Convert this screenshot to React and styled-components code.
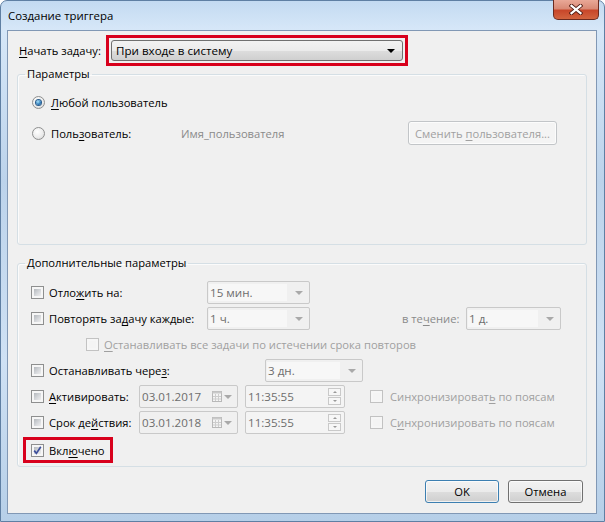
import React from 'react'
import styled, { createGlobalStyle } from 'styled-components'

const GlobalStyle = createGlobalStyle`
  html, body { margin: 0; padding: 0; }
  body {
    width: 605px;
    height: 522px;
    overflow: hidden;
    font-family: "Open Sans", "Noto Sans", sans-serif;
    font-size: 11.2px;
    color: #000;
    white-space: nowrap;
  }
`

const Window = styled.div`
  box-sizing: border-box;
  width: 605px;
  height: 522px;
  display: flex;
  flex-direction: column;
  padding: 0 7px 7px 6px;
  border: 1px solid #5f7fa3;
  border-radius: 7px 7px 0 0;
  background: linear-gradient(180deg, #c3daf1 0px, #d6e7f8 28px, #bcd3eb 180px, #cfe1f4 360px, #b6cfe8 100%);
`

const TitleBar = styled.div`
  height: 29px;
  display: flex;
  align-items: center;
  justify-content: space-between;
  padding-left: 1px;
`

const Title = styled.span`
  font-size: 11.4px;
  color: #000;
`

const CloseButton = styled.div`
  align-self: flex-start;
  box-sizing: border-box;
  width: 46px;
  height: 20px;
  margin: -1px -2px 0 0;
  border: 1px solid #6b2a1f;
  border-top: none;
  border-radius: 0 0 5px 5px;
  background: linear-gradient(180deg, #e9a897 0%, #d98a76 45%, #c8472a 55%, #d2643f 100%);
  display: flex;
  align-items: center;
  justify-content: center;
`

const Client = styled.div`
  flex: 1;
  display: flex;
  flex-direction: column;
  background: #f0f0f0;
  border: 1px solid #8198b5;
  padding: 4px 9px 0 9px;
`

const TopRow = styled.div`
  display: flex;
  align-items: center;
  padding-left: 2px;
`

const StartLabel = styled.span`
  width: 87px;
  flex: none;
`

const Highlight = styled.div`
  display: inline-flex;
  align-items: center;
  align-self: flex-start;
  border: 3px solid #d8001c;
  padding: ${p => p.$pad};
  margin-left: ${p => p.$shift || 0}px;
`

const Select = styled.div`
  box-sizing: border-box;
  width: 292px;
  height: 21px;
  border: 1px solid #707070;
  border-radius: 3px;
  background: linear-gradient(180deg, #f2f2f2 0%, #ebebeb 50%, #dddddd 51%, #cfcfcf 100%);
  display: flex;
  align-items: center;
  justify-content: space-between;
  padding: 0 7px 0 4px;
  font-size: 11.6px;
`

const BlackArrow = styled.span`
  width: 0;
  height: 0;
  border-left: 4px solid transparent;
  border-right: 4px solid transparent;
  border-top: 4px solid #000;
`

const Group = styled.fieldset`
  margin: ${p => p.$top}px 0 0 0;
  border: 1px solid #d5dfe5;
  border-radius: 3px;
  box-shadow: inset 1px 1px 0 #fbfbfb;
  padding: 10px 13px ${p => p.$bottom}px ${p => p.$left}px;
  min-width: 0;
`

const Legend = styled.legend`
  padding: 0 2px;
  margin-left: ${p => p.$shift}px;
  line-height: 16px;
`

const Rows = styled.div`
  display: flex;
  flex-direction: column;
  gap: ${p => p.$gap}px;
`

const Row = styled.div`
  display: flex;
  align-items: center;
  height: ${p => p.$h || 23}px;
`

const Choice = styled.span`
  display: flex;
  align-items: center;
  flex: none;
  gap: ${p => p.$gap || 5}px;
  width: ${p => (p.$w ? `${p.$w}px` : 'auto')};
  margin-left: ${p => p.$indent || 0}px;
  color: ${p => (p.$disabled ? '#a0a0a0' : '#000')};
`

const U = styled.span`
  text-decoration: underline;
  text-underline-offset: 2px;
  text-decoration-thickness: 1px;
`

const RadioOuter = styled.span`
  box-sizing: border-box;
  width: 13px;
  height: 13px;
  flex: none;
  border-radius: 50%;
  border: 1px solid #8e8f8f;
  background: radial-gradient(circle at 40% 35%, #ffffff 0, #ececec 55%, #cfcfcf 100%);
  display: inline-flex;
  align-items: center;
  justify-content: center;
`

const RadioDot = styled.span`
  width: 5px;
  height: 5px;
  border-radius: 50%;
  background: radial-gradient(circle at 40% 35%, #a8e4fc 0, #2b78b8 60%, #11406f 100%);
  box-shadow: 0 0 0 1px #2a5d8c;
`

const Box = styled.span`
  box-sizing: border-box;
  width: 13px;
  height: 13px;
  flex: none;
  border: 1px solid ${p => (p.$disabled ? '#c2c2c2' : '#8e8f8f')};
  padding: 2px;
  background: #f6f6f6;
  display: inline-flex;
  position: relative;
`

const BoxFill = styled.span`
  flex: 1;
  background: ${p => (p.$disabled ? '#f4f4f4' : 'linear-gradient(135deg, #b4b8bd 0%, #d9dbde 60%, #eeeeee 100%)')};
`

const CheckMark = styled.svg`
  position: absolute;
  left: 0;
  top: 0;
`

const Muted = styled.span`
  color: ${p => p.$c || '#8a8a8a'};
  width: ${p => (p.$w ? `${p.$w}px` : 'auto')};
  margin-left: ${p => p.$ml || 0}px;
  flex: none;
`

const FlatButton = styled.div`
  box-sizing: border-box;
  width: ${p => p.$w}px;
  height: ${p => p.$h}px;
  border: 1px solid ${p => p.$border};
  border-radius: 3px;
  background: ${p => p.$bg};
  color: ${p => p.$color || '#000'};
  display: flex;
  align-items: center;
  justify-content: center;
  flex: none;
  box-shadow: inset 0 0 0 1px rgba(255, 255, 255, 0.7);
`

const Field = styled.div`
  box-sizing: border-box;
  width: ${p => p.$w}px;
  height: 23px;
  margin-left: ${p => p.$ml || 0}px;
  border: 1px solid #c9c9c9;
  border-radius: 2px;
  background: ${p => p.$bg || '#f0f0f0'};
  display: flex;
  align-items: center;
  padding: 2px 2px 2px 1px;
  flex: none;
  color: #6d6d6d;
  font-size: 11.6px;
`

const FieldText = styled.span`
  align-self: stretch;
  display: flex;
  align-items: center;
  flex: 1;
  padding-left: 1px;
  background: ${p => p.$bg || 'transparent'};
  margin-right: ${p => p.$mr || 0}px;
`

const GrayArrow = styled.span`
  width: 0;
  height: 0;
  border-left: 4px solid transparent;
  border-right: 4px solid transparent;
  border-top: 4px solid #a9a9a9;
  margin-right: ${p => p.$mr || 4}px;
  margin-left: ${p => p.$ml || 0}px;
  flex: none;
`

const Spinner = styled.div`
  display: flex;
  flex-direction: column;
  gap: 1px;
  width: 13px;
  flex: none;
  margin-right: 1px;
`

const SpinPart = styled.div`
  box-sizing: border-box;
  height: 8px;
  border: 1px solid #c9c9c9;
  background: #f7f7f7;
  display: flex;
  align-items: center;
  justify-content: center;
  &::before {
    content: '';
    width: 0;
    height: 0;
    border-left: 2px solid transparent;
    border-right: 2px solid transparent;
    ${p => (p.$up ? 'border-bottom: 2px solid #9a9a9a;' : 'border-top: 2px solid #9a9a9a;')}
  }
`

const ButtonRow = styled.div`
  display: flex;
  justify-content: flex-end;
  gap: 9px;
  margin: 13px 4px 0 0;
`

const btnBg = 'linear-gradient(180deg, #f2f2f2 0%, #ebebeb 50%, #dddddd 51%, #cfcfcf 100%)'

function Radio({ checked }) {
  return <RadioOuter>{checked && <RadioDot />}</RadioOuter>
}

function Check({ checked, disabled }) {
  return (
    <Box $disabled={disabled}>
      <BoxFill $disabled={disabled} />
      {checked && (
        <CheckMark width="11" height="11" viewBox="0 0 11 11">
          <path d="M2.2 5.6 L4.4 8.4 L8.8 1.8" fill="none" stroke="#3d4f9c" strokeWidth="1.7" />
        </CheckMark>
      )}
    </Box>
  )
}

function Combo({ w, value, ml }) {
  return (
    <Field $w={w} $ml={ml}>
      <FieldText $bg="#f7f7f7" $mr={8}>{value}</FieldText>
      <GrayArrow />
    </Field>
  )
}

function DateField({ value }) {
  return (
    <Field $w={99}>
      <FieldText>{value}</FieldText>
      <svg width="10" height="11" viewBox="0 0 10 11">
        <rect x="0.5" y="0.5" width="9" height="10" fill="#f4f4f4" stroke="#b8b8b8" />
        <rect x="0.5" y="0.5" width="9" height="2" fill="#c9c9c9" />
        <path d="M3.5 3 V10 M6.5 3 V10 M1 5.5 H9 M1 8 H9" stroke="#cdcdcd" strokeWidth="1" />
      </svg>
      <GrayArrow $mr={3} $ml={2} />
    </Field>
  )
}

function TimeField({ value }) {
  return (
    <Field $w={100} $ml={7} $bg="#f4f4f4">
      <FieldText>{value}</FieldText>
      <Spinner>
        <SpinPart $up />
        <SpinPart />
      </Spinner>
    </Field>
  )
}

export default function App() {
  return (
    <>
      <GlobalStyle />
      <Window>
        <TitleBar>
          <Title>Создание триггера</Title>
          <CloseButton>
            <svg width="14" height="11" viewBox="0 0 14 11">
              <path d="M2.5 1.8 L11.5 9.2 M11.5 1.8 L2.5 9.2" stroke="#4e1b12" strokeWidth="4" strokeLinecap="square" />
              <path d="M2.5 1.8 L11.5 9.2 M11.5 1.8 L2.5 9.2" stroke="#ffffff" strokeWidth="2.2" strokeLinecap="square" />
            </svg>
          </CloseButton>
        </TitleBar>
        <Client>
          <TopRow>
            <StartLabel><U>Н</U>ачать задачу:</StartLabel>
            <Highlight $pad="2px">
              <Select>
                <span>При входе в систему</span>
                <BlackArrow />
              </Select>
            </Highlight>
          </TopRow>

          <Group $top={0} $bottom={99} $left={14}>
            <Legend $shift={-7}>Параметры</Legend>
            <Rows $gap={9}>
              <Row $h={20}>
                <Choice $gap={6}>
                  <Radio checked />
                  <span><U>Л</U>юбой пользователь</span>
                </Choice>
              </Row>
              <Row $h={24}>
                <Choice $gap={6} $w={149}>
                  <Radio />
                  <span>Поль<U>з</U>ователь:</span>
                </Choice>
                <Muted $w={227}>Имя_пользователя</Muted>
                <FlatButton $w={149} $h={24} $border="#c2c5c8" $bg="#f4f4f4" $color="#a0a0a0">
                  <span>Сменить <U>п</U>ользователя...</span>
                </FlatButton>
              </Row>
            </Rows>
          </Group>

          <Group $top={10} $bottom={3} $left={13}>
            <Legend $shift={-6}>Дополнительные параметры</Legend>
            <Rows $gap={3}>
              <Row>
                <Choice $w={176}>
                  <Check />
                  <span>Отло<U>ж</U>ить на:</span>
                </Choice>
                <Combo w={103} value="15 мин." />
              </Row>
              <Row>
                <Choice $w={176}>
                  <Check />
                  <span>Повторять за<U>д</U>ачу каждые:</span>
                </Choice>
                <Combo w={103} value="1 ч." />
                <Muted $ml={92} $w={64}>в те<U>ч</U>ение:</Muted>
                <Combo w={95} value="1 д." />
              </Row>
              <Row>
                <Choice $indent={55} $disabled>
                  <Check disabled />
                  <span><U>О</U>станавливать все задачи по истечении срока повторов</span>
                </Choice>
              </Row>
              <Row>
                <Choice $w={234}>
                  <Check />
                  <span>Останавливать чере<U>з</U>:</span>
                </Choice>
                <Combo w={98} value="3 дн." />
              </Row>
              <Row>
                <Choice $w={108}>
                  <Check />
                  <span><U>А</U>ктивировать:</span>
                </Choice>
                <DateField value="03.01.2017" />
                <TimeField value="11:35:55" />
                <Choice $indent={25} $disabled $gap={7}>
                  <Check disabled />
                  <span>Синхронизироват<U>ь</U> по поясам</span>
                </Choice>
              </Row>
              <Row>
                <Choice $w={108}>
                  <Check />
                  <span>Срок де<U>й</U>ствия:</span>
                </Choice>
                <DateField value="03.01.2018" />
                <TimeField value="11:35:55" />
                <Choice $indent={25} $disabled $gap={7}>
                  <Check disabled />
                  <span>С<U>и</U>нхронизировать по поясам</span>
                </Choice>
              </Row>
              <Highlight $pad="0 5px" $shift={-8}>
                <Row $h={20}>
                  <Choice>
                    <Check checked />
                    <span>Вкл<U>ю</U>чено</span>
                  </Choice>
                </Row>
              </Highlight>
            </Rows>
          </Group>

          <ButtonRow>
            <FlatButton $w={74} $h={23} $border="#3c7fb1" $bg={btnBg}>OK</FlatButton>
            <FlatButton $w={75} $h={23} $border="#707070" $bg={btnBg}>Отмена</FlatButton>
          </ButtonRow>
        </Client>
      </Window>
    </>
  )
}
